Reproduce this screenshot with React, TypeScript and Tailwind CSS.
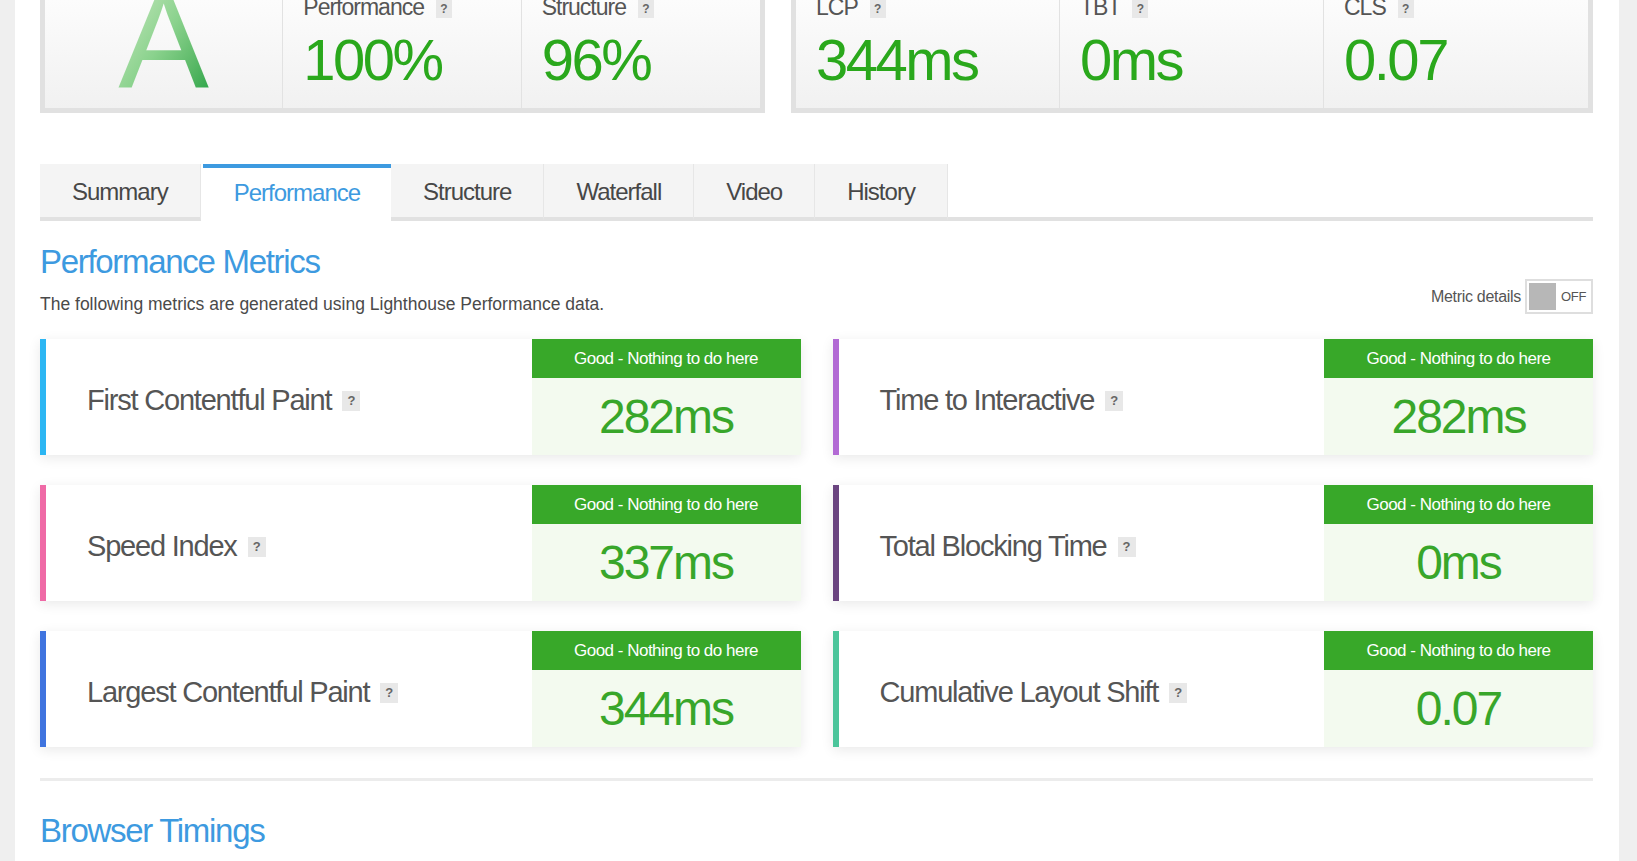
import React from 'react';

const sans = "font-['Liberation_Sans',Arial,sans-serif]";

const topLeft = [
  { label: 'Performance', value: '100%' },
  { label: 'Structure', value: '96%' },
];

const topRight = [
  { label: 'LCP', value: '344ms' },
  { label: 'TBT', value: '0ms' },
  { label: 'CLS', value: '0.07' },
];

const tabs = ['Summary', 'Performance', 'Structure', 'Waterfall', 'Video', 'History'];

const metrics = [
  { name: 'First Contentful Paint', value: '282ms', bar: 'border-[#2cb6f3]' },
  { name: 'Time to Interactive', value: '282ms', bar: 'border-[#b26ad4]' },
  { name: 'Speed Index', value: '337ms', bar: 'border-[#ef6aa6]' },
  { name: 'Total Blocking Time', value: '0ms', bar: 'border-[#6b4580]' },
  { name: 'Largest Contentful Paint', value: '344ms', bar: 'border-[#3f74df]' },
  { name: 'Cumulative Layout Shift', value: '0.07', bar: 'border-[#4cc59b]' },
];

const Help: React.FC<{ big?: boolean }> = ({ big }) => (
  <span
    className={`flex items-center justify-center bg-[#e8e8e8] text-[#666] font-bold ${sans} ${
      big ? 'w-[18px] h-[20px] text-[13px]' : 'w-[16px] h-[18px] text-[12px]'
    }`}
  >
    ?
  </span>
);

const Stat: React.FC<{ label: string; value: string }> = ({ label, value }) => (
  <div className="pl-[20px]">
    <div className="flex items-start gap-[12px] -mt-[4px] h-[23px]">
      <span className={`${sans} text-[23px] leading-[23px] tracking-[-1px] text-[#555]`}>{label}</span>
      <span className="mt-[4px]">
        <Help />
      </span>
    </div>
    <div className={`${sans} mt-[12px] text-[58px] leading-none tracking-[-2.5px] text-[#2aa81c]`}>{value}</div>
  </div>
);

export default function App() {
  return (
    <div className="flex h-[861px] overflow-hidden bg-[#efefef]">
      <div className="w-[15px] shrink-0" />
      <div className="w-[1604px] shrink-0 bg-white pl-[25px] pr-[26px]">
        {/* score boxes */}
        <div className="flex gap-[26px]">
          <div className="w-[725px] h-[113px] border-[5px] border-t-0 border-[#e1e1e1] bg-linear-to-b from-[#fcfcfc] to-[#f1f1f1] grid grid-cols-3 divide-x divide-[#e2e2e2] overflow-hidden">
            <div className="flex justify-center">
              <span className={`-mt-[28px] text-[136px] leading-none ${sans} bg-linear-to-br from-[#d2ecc9] via-[#8ad28d] to-[#16a041] bg-clip-text text-transparent`}>
                A
              </span>
            </div>
            {topLeft.map((s) => (
              <Stat key={s.label} {...s} />
            ))}
          </div>
          <div className="w-[802px] h-[113px] border-[5px] border-t-0 border-[#e1e1e1] bg-linear-to-b from-[#fcfcfc] to-[#f1f1f1] grid grid-cols-3 divide-x divide-[#e2e2e2] overflow-hidden">
            {topRight.map((s) => (
              <Stat key={s.label} {...s} />
            ))}
          </div>
        </div>

        {/* tabs */}
        <div className={`${sans} flex mt-[51px] text-[24px] tracking-[-1px]`}>
          {tabs.map((t) =>
            t === 'Performance' ? (
              <div
                key={t}
                className="h-[57px] ml-[2px] px-[31px] pb-[4px] border-t-[4px] border-[#3d9ae0] bg-white text-[#3d9ae0] flex items-center"
              >
                {t}
              </div>
            ) : (
              <div
                key={t}
                className="h-[57px] px-[32px] pt-[2px] bg-[#f4f4f4] text-[#474747] border-b-[4px] border-b-[#e1e1e1] border-r border-r-[#e6e6e6] flex items-center"
              >
                {t}
              </div>
            )
          )}
          <div className="flex-1 border-b-[4px] border-[#e1e1e1]" />
        </div>

        {/* heading */}
        <div className="flex justify-between mt-[22px]">
          <div>
            <h2 className={`${sans} text-[33px] leading-[37px] tracking-[-1.3px] text-[#3d9ae0]`}>Performance Metrics</h2>
            <p className={`mt-[14px] ${sans} text-[17.5px] leading-[20px] text-[#4a4a4a]`}>
              The following metrics are generated using Lighthouse Performance data.
            </p>
          </div>
          <div className="self-end flex items-center gap-[4px]">
            <span className={`${sans} text-[16px] tracking-[-0.3px] text-[#555]`}>Metric details</span>
            <div className="w-[68px] h-[35px] border-2 border-[#dedede] bg-white flex items-center">
              <div className="w-[27px] h-[27px] ml-[2px] bg-[#b7b7b7]" />
              <span className={`${sans} flex-1 text-center text-[13px] tracking-[-0.3px] text-[#555]`}>OFF</span>
            </div>
          </div>
        </div>

        {/* metric cards */}
        <div className="grid grid-cols-2 gap-x-[32px] gap-y-[30px] mt-[25px]">
          {metrics.map((m) => (
            <div
              key={m.name}
              className={`h-[116px] flex bg-white border-l-[6px] ${m.bar} shadow-[0_3px_12px_rgba(0,0,0,0.09)]`}
            >
              <div className="flex-1 flex items-center pl-[41px] pt-[7px] gap-[11px]">
                <span className={`${sans} text-[29px] tracking-[-1.2px] text-[#555]`}>{m.name}</span>
                <Help big />
              </div>
              <div className="w-[269px] flex flex-col">
                <div className={`${sans} h-[39px] bg-[#38a829] text-white text-[17px] tracking-[-0.5px] flex items-center justify-center`}>
                  Good - Nothing to do here
                </div>
                <div className={`${sans} flex-1 bg-[#f3faef] text-[#38a62a] text-[48px] leading-none tracking-[-2px] flex items-center justify-center`}>
                  {m.value}
                </div>
              </div>
            </div>
          ))}
        </div>

        <div className="mt-[31px] h-[3px] bg-[#ececec]" />

        <h2 className={`${sans} mt-[31px] text-[33px] leading-[37px] tracking-[-1.3px] text-[#3d9ae0]`}>Browser Timings</h2>
      </div>
    </div>
  );
}
